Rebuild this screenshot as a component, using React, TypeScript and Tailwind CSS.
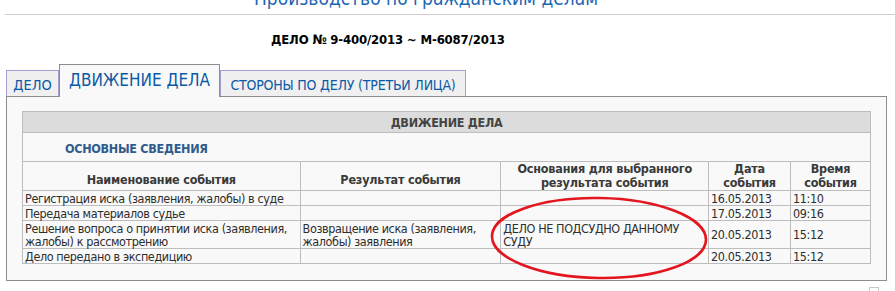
import React from "react";

const rows = [
  { name: "Регистрация иска (заявления, жалобы) в суде", res: "", base: "", date: "16.05.2013", time: "11:10", tall: false },
  { name: "Передача материалов судье", res: "", base: "", date: "17.05.2013", time: "09:16", tall: false },
  { name: "Решение вопроса о принятии иска (заявления, жалобы) к рассмотрению", res: "Возвращение иска (заявления, жалобы) заявления", base: "ДЕЛО НЕ ПОДСУДНО ДАННОМУ СУДУ", date: "20.05.2013", time: "15:12", tall: true },
  { name: "Дело передано в экспедицию", res: "", base: "", date: "20.05.2013", time: "15:12", tall: false },
];

export default function App() {
  return (
    <div
      className="relative w-[895px] h-[291px] overflow-hidden bg-white text-[#2e2e2e]"
      style={{ fontFamily: '"DejaVu Sans Condensed", "DejaVu Sans", Verdana, sans-serif' }}
    >
      <div className="-mt-[13px] pl-[254px] text-[19px] leading-[22px] text-[#1c67b3] whitespace-nowrap">
        Производство по гражданским делам
      </div>
      <div className="ml-[5px] mt-[5px] border-t border-[#cfcfcf]" />
      <div className="mt-[17px] pl-[271px] text-[13px] leading-[16px] font-bold text-black whitespace-nowrap tracking-[-0.15px]">
        ДЕЛО № 9-400/2013 ~ М-6087/2013
      </div>
      <div className="mt-[16px] ml-[6px] flex items-end h-[32px]">
        <div className="h-[26px] w-[53px] flex items-center justify-center pt-[4px] border border-b-0 border-[#a19fcf] bg-[#f0f0f0] text-[14.5px] text-[#0b5aa6]">
          ДЕЛО
        </div>
        <div className="relative z-10 -mb-px h-[33px] w-[161px] flex items-center justify-center border border-b-0 border-[#8d8d8d] bg-[#f9f9f9] text-[17px] text-[#0b5aa6] whitespace-nowrap">
          ДВИЖЕНИЕ ДЕЛА
        </div>
        <div className="h-[26px] w-[246px] flex items-center justify-center pt-[4px] border border-b-0 border-[#a19fcf] bg-[#f0f0f0] text-[14px] text-[#0b5aa6] whitespace-nowrap tracking-[-0.2px]">
          СТОРОНЫ ПО ДЕЛУ (ТРЕТЬИ ЛИЦА)
        </div>
      </div>
      <div className="ml-[6px] w-[881px] h-[185px] border border-[#8d8d8d] bg-[#f9f9f9] pt-[14px] pl-[15px]">
        <table className="w-[849px] border-collapse text-[12.5px] leading-[13px]">
          <colgroup>
            <col className="w-[278px]" />
            <col className="w-[201px]" />
            <col className="w-[208px]" />
            <col className="w-[82px]" />
            <col className="w-[80px]" />
          </colgroup>
          <tbody>
            <tr>
              <td colSpan={5} className="h-[21px] border border-[#bdbdbd] bg-[#dcdcdc] text-center font-bold text-[#444] tracking-[-0.3px]">
                ДВИЖЕНИЕ ДЕЛА
              </td>
            </tr>
            <tr>
              <td colSpan={5} className="h-[29px] border border-[#bdbdbd] pl-[42px] pt-[2px] font-bold text-[#2f5b8c] tracking-[-0.3px]">
                ОСНОВНЫЕ СВЕДЕНИЯ
              </td>
            </tr>
            <tr className="font-bold text-[#3a3a3a] text-center tracking-[-0.2px]">
              <td className="h-[29px] border border-[#bdbdbd] pt-[6px]">Наименование события</td>
              <td className="border border-[#bdbdbd] pt-[6px]">Результат события</td>
              <td className="border border-[#bdbdbd] leading-[14px]">Основания для выбранного<br />результата события</td>
              <td className="border border-[#bdbdbd] leading-[14px]">Дата<br />события</td>
              <td className="border border-[#bdbdbd] leading-[14px]">Время<br />события</td>
            </tr>
            {rows.map((r, i) => (
              <tr key={i} className="align-middle tracking-[-0.4px]">
                <td className={`${r.tall ? "h-[28px]" : "h-[15px]"} border border-[#bdbdbd] pl-[2px] pr-[2px]`}>{r.name}</td>
                <td className="border border-[#bdbdbd] pl-[2px] pr-[2px]">{r.res}</td>
                <td className="border border-[#bdbdbd] pl-[2px] pr-[2px] align-top pt-[1px]">{r.base}</td>
                <td className="border border-[#bdbdbd] pl-[2px]">{r.date}</td>
                <td className="border border-[#bdbdbd] pl-[2px]">{r.time}</td>
              </tr>
            ))}
          </tbody>
        </table>
      </div>
      <div className="absolute left-[869px] top-[287px] h-[6px] w-[10px] border border-[#c8c8c8] bg-white" />
      <svg className="absolute left-0 top-0 pointer-events-none" width="895" height="291">
        <ellipse cx="599" cy="238" rx="107" ry="40" fill="none" stroke="#e3161f" strokeWidth="2.6" transform="rotate(1 599 238)" />
      </svg>
    </div>
  );
}
